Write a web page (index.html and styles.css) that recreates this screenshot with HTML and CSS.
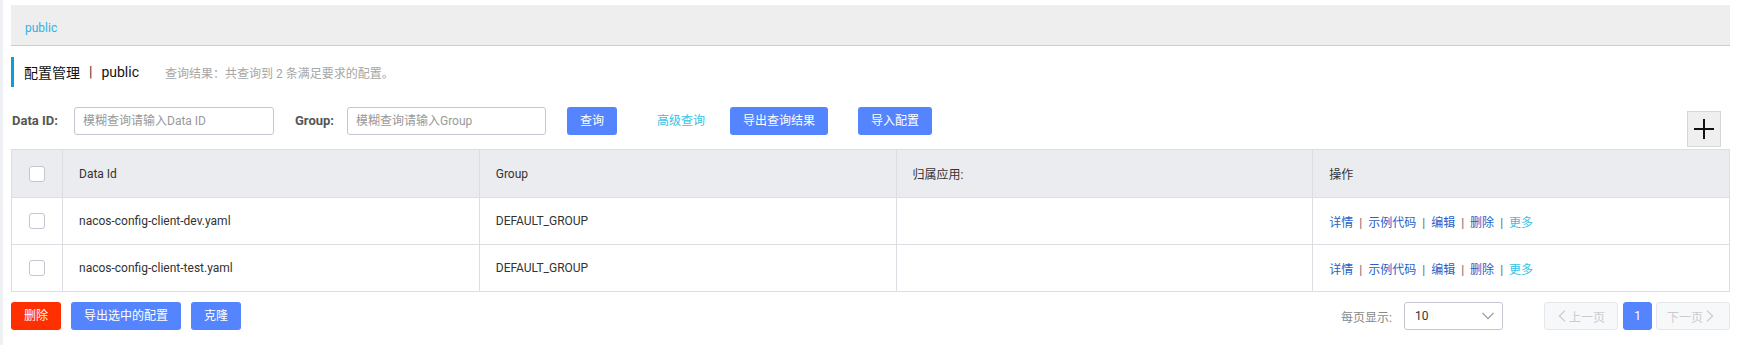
FILE: index.html
```html
<!DOCTYPE html>
<html lang="zh-CN">
<head>
    <meta charset="UTF-8">
    <meta name="viewport" content="width=device-width, initial-scale=1.0">
    <title>配置管理</title>
    <link rel="stylesheet" href="styles.css">
</head>
<body>
<div class="page">
    <div class="ns-bar"><span class="ns-item">public</span></div>

    <div class="title-row">
        <span class="title">配置管理</span>
        <span class="title-sep">|</span>
        <span class="title-ns">public</span>
        <span class="result">查询结果：共查询到 2 条满足要求的配置。</span>
    </div>

    <div class="search-row">
        <label class="field-label label-id">Data ID:</label>
        <input class="field" type="text" placeholder="模糊查询请输入Data ID">
        <label class="field-label label-group">Group:</label>
        <input class="field field-group" type="text" placeholder="模糊查询请输入Group">
        <button class="btn btn-primary btn-query">查询</button>
        <a class="adv-link">高级查询</a>
        <button class="btn btn-primary btn-export">导出查询结果</button>
        <button class="btn btn-primary btn-import">导入配置</button>
        <button class="add-btn" title="新建配置">
            <svg width="22" height="22" viewBox="0 0 22 22">
                <path d="M11 1v20M1 11h20" stroke="#111" stroke-width="2" fill="none"/>
            </svg>
        </button>
    </div>

    <table class="config-table">
        <colgroup>
            <col class="col-check">
            <col><col><col><col>
        </colgroup>
        <thead>
            <tr>
                <th class="cell-check"><span class="checkbox"></span></th>
                <th>Data Id</th>
                <th>Group</th>
                <th>归属应用:</th>
                <th>操作</th>
            </tr>
        </thead>
        <tbody>
            <tr>
                <td class="cell-check"><span class="checkbox"></span></td>
                <td>nacos-config-client-dev.yaml</td>
                <td>DEFAULT_GROUP</td>
                <td></td>
                <td class="ops">
                    <a>详情</a><span class="sep">|</span><a>示例代码</a><span class="sep">|</span><a>编辑</a><span class="sep">|</span><a>删除</a><span class="sep">|</span><a class="more">更多</a>
                </td>
            </tr>
            <tr>
                <td class="cell-check"><span class="checkbox"></span></td>
                <td>nacos-config-client-test.yaml</td>
                <td>DEFAULT_GROUP</td>
                <td></td>
                <td class="ops">
                    <a>详情</a><span class="sep">|</span><a>示例代码</a><span class="sep">|</span><a>编辑</a><span class="sep">|</span><a>删除</a><span class="sep">|</span><a class="more">更多</a>
                </td>
            </tr>
        </tbody>
    </table>

    <div class="footer-row">
        <button class="btn btn-danger btn-del">删除</button>
        <button class="btn btn-primary btn-export-sel">导出选中的配置</button>
        <button class="btn btn-primary btn-clone">克隆</button>

        <div class="pager">
            <span class="page-size-label">每页显示:</span>
            <div class="select">
                <span>10</span>
                <svg width="12" height="8" viewBox="0 0 12 8">
                    <path d="M0.5 0.8L6 6.6L11.5 0.8" stroke="#999" stroke-width="1.2" fill="none"/>
                </svg>
            </div>
            <button class="page-btn page-prev" disabled>
                <svg width="8" height="12" viewBox="0 0 8 12">
                    <path d="M7 0.6L1.4 6L7 11.4" stroke="#ccc" stroke-width="1.3" fill="none"/>
                </svg>
                <span>上一页</span>
            </button>
            <button class="page-btn page-current">1</button>
            <button class="page-btn page-next" disabled>
                <span>下一页</span>
                <svg width="8" height="12" viewBox="0 0 8 12">
                    <path d="M1 0.6L6.6 6L1 11.4" stroke="#ccc" stroke-width="1.3" fill="none"/>
                </svg>
            </button>
        </div>
    </div>
</div>
</body>
</html>
```

FILE: styles.css
```css
* {
    box-sizing: border-box;
}
body {
    margin: 0;
    font-family: Roboto, "Helvetica Neue", Arial, "Noto Sans CJK SC", sans-serif;
    font-size: 12px;
    color: #333;
    background: #fff;
}
.page {
    border-left: 3px solid #eef0f4;
    padding: 5px 11px 0 8px;
    min-height: 345px;
}

/* namespace bar */
.ns-bar {
    height: 41px;
    background: #eee;
    border-bottom: 1px solid #ccc;
    padding-left: 14px;
    line-height: 46px;
}
.ns-item {
    color: #2fb3df;
}

/* page title */
.title-row {
    display: flex;
    align-items: center;
    margin-top: 11px;
    height: 30px;
    border-left: 3px solid #0c9fd6;
    padding-left: 10px;
}
.title, .title-ns {
    font-size: 14px;
    font-weight: normal;
    color: #111;
}
.title-sep {
    font-size: 14px;
    color: #333;
    margin: 0 9px;
}
.result {
    margin-left: 26px;
    color: #a6a6a6;
}

/* search form */
.search-row {
    display: flex;
    align-items: flex-start;
    margin-top: 20px;
    height: 42px;
}
.field-label {
    height: 28px;
    line-height: 28px;
    font-size: 13px;
    font-weight: bold;
    color: #555;
    padding-left: 1px;
}
.label-id {
    width: 63px;
}
.label-group {
    width: 53px;
    margin-left: 20px;
}
.field {
    width: 200px;
    height: 28px;
    border: 1px solid #c4c6cf;
    border-radius: 3px;
    padding: 0 8px;
    font-family: inherit;
    font-size: 12px;
    color: #333;
    outline: none;
}
.field::placeholder {
    color: #999;
}
.field-group {
    width: 199px;
}
.btn {
    height: 28px;
    padding: 0 12px;
    border: 1px solid transparent;
    border-radius: 3px;
    font-family: inherit;
    font-size: 12px;
    color: #fff;
    cursor: pointer;
    line-height: 26px;
}
.btn-primary {
    background: #5584ff;
}
.btn-danger {
    background: #ff3000;
}
.btn-query {
    margin-left: 21px;
}
.adv-link {
    margin-left: 40px;
    line-height: 28px;
    color: #33c3e6;
    cursor: pointer;
}
.btn-export {
    margin-left: 25px;
}
.btn-import {
    margin-left: 30px;
}
.add-btn {
    margin-left: auto;
    margin-right: 9px;
    margin-top: 4px;
    width: 34px;
    height: 36px;
    padding: 0;
    background: #efefef;
    border: 1px solid #d6d6d6;
    display: flex;
    align-items: center;
    justify-content: center;
    cursor: pointer;
}

/* table */
.config-table {
    width: 100%;
    border-collapse: collapse;
    table-layout: fixed;
    border: 1px solid #dcdee3;
}
.col-check {
    width: 51px;
}
.config-table th, .config-table td {
    border: 1px solid #dcdee3;
    padding: 0 16px;
    text-align: left;
    font-weight: normal;
    color: #333;
}
.config-table th {
    height: 48px;
    background: #ebecf0;
}
.config-table td {
    height: 47px;
}
.config-table .cell-check {
    padding: 0;
    text-align: center;
}
.checkbox {
    display: inline-block;
    width: 16px;
    height: 16px;
    border: 1px solid #c4c6cf;
    border-radius: 3px;
    background: #fff;
    vertical-align: middle;
}
.ops a {
    color: #2860c8;
    cursor: pointer;
}
.ops a.more {
    color: #33c3e6;
}
.ops .sep {
    margin: 0 6px;
    color: #666;
}

/* footer */
.footer-row {
    display: flex;
    align-items: center;
    margin-top: 10px;
    height: 28px;
}
.btn-del {
    width: 50px;
}
.btn-export-sel {
    margin-left: 10px;
}
.btn-clone {
    margin-left: 10px;
}
.pager {
    margin-left: auto;
    display: flex;
    align-items: center;
}
.page-size-label {
    color: #888;
    margin-right: 12px;
}
.select {
    width: 99px;
    height: 28px;
    border: 1px solid #c4c6cf;
    border-radius: 3px;
    padding: 0 8px 0 10px;
    display: flex;
    align-items: center;
    justify-content: space-between;
    color: #333;
}
.page-btn {
    height: 28px;
    border-radius: 3px;
    font-family: inherit;
    font-size: 12px;
    display: flex;
    align-items: center;
    padding: 0;
}
.page-prev, .page-next {
    width: 74px;
    background: #f7f8fa;
    border: 1px solid #e6e7eb;
    color: #ccc;
    gap: 3px;
}
.page-prev {
    margin-left: 41px;
    padding-left: 13px;
}
.page-next {
    padding-left: 10px;
}
.page-current {
    width: 29px;
    margin: 0 4px 0 5px;
    justify-content: center;
    background: #5584ff;
    border: 1px solid #5584ff;
    color: #fff;
}
```
